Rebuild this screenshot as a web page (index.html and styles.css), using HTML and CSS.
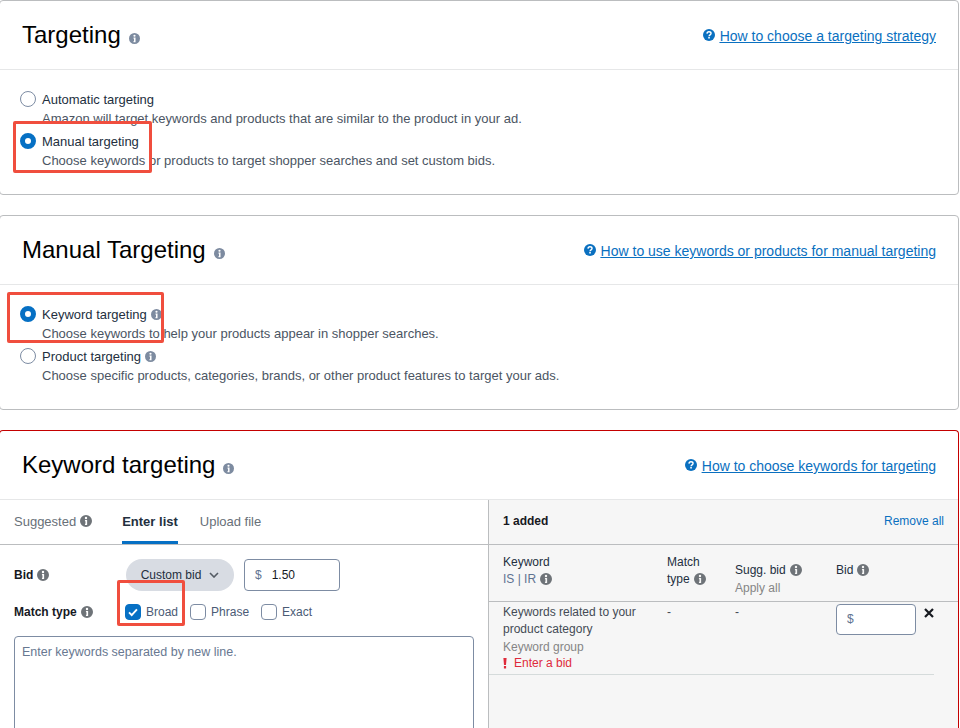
FILE: index.html
```html
<!DOCTYPE html>
<html lang="en">
<head>
<meta charset="utf-8">
<title>Targeting</title>
<link rel="stylesheet" href="styles.css">
</head>
<body>
<svg class="defs" width="0" height="0" aria-hidden="true">
  <symbol id="info" viewBox="0 0 16 16">
    <path fill-rule="evenodd" d="M8 0a8 8 0 1 1 0 16A8 8 0 0 1 8 0ZM6.6 6.6v1.8h.7v3.2h-.7v1.8h2.9V6.6ZM8 2.4a1.6 1.6 0 1 0 0 3.2 1.6 1.6 0 0 0 0-3.2Z"/>
  </symbol>
  <symbol id="help" viewBox="0 0 16 16">
    <circle cx="8" cy="8" r="8" fill="currentColor"/>
    <path d="M5.3 6.2C5.4 4.5 6.5 3.6 8 3.6c1.6 0 2.7.9 2.7 2.3 0 1.9-2.5 1.9-2.6 3.7" fill="none" stroke="#fff" stroke-width="1.9"/>
    <rect x="7" y="10.6" width="2.1" height="2.1" fill="#fff"/>
  </symbol>
</svg>

<section class="card">
  <header class="card-head">
    <h2 class="title">Targeting<svg class="ic-title"><use href="#info"/></svg></h2>
    <a class="help" href="#"><svg class="ic-help"><use href="#help"/></svg><span class="help-text">How to choose a targeting strategy</span></a>
  </header>
  <div class="card-body">
    <div class="option">
      <span class="radio"></span>
      <div class="opt-text"><div class="opt-label">Automatic targeting</div><div class="opt-desc">Amazon will target keywords and products that are similar to the product in your ad.</div></div>
    </div>
    <div class="option">
      <span class="radio on"></span>
      <div class="opt-text"><div class="opt-label">Manual targeting</div><div class="opt-desc">Choose keywords or products to target shopper searches and set custom bids.</div></div>
    </div>
  </div>
</section>

<section class="card">
  <header class="card-head">
    <h2 class="title">Manual Targeting<svg class="ic-title"><use href="#info"/></svg></h2>
    <a class="help" href="#"><svg class="ic-help"><use href="#help"/></svg><span class="help-text">How to use keywords or products for manual targeting</span></a>
  </header>
  <div class="card-body">
    <div class="option">
      <span class="radio on"></span>
      <div class="opt-text"><div class="opt-label">Keyword targeting<svg class="ic-opt"><use href="#info"/></svg></div><div class="opt-desc">Choose keywords to help your products appear in shopper searches.</div></div>
    </div>
    <div class="option">
      <span class="radio"></span>
      <div class="opt-text"><div class="opt-label">Product targeting<svg class="ic-opt"><use href="#info"/></svg></div><div class="opt-desc">Choose specific products, categories, brands, or other product features to target your ads.</div></div>
    </div>
  </div>
</section>

<section class="card card-error">
  <header class="card-head">
    <h2 class="title">Keyword targeting<svg class="ic-title"><use href="#info"/></svg></h2>
    <a class="help" href="#"><svg class="ic-help"><use href="#help"/></svg><span class="help-text">How to choose keywords for targeting</span></a>
  </header>
  <div class="split">
    <div class="left">
      <nav class="tabs">
        <span class="tab">Suggested<svg class="ic-dark"><use href="#info"/></svg></span>
        <span class="tab active">Enter list</span>
        <span class="tab">Upload file</span>
      </nav>
      <div class="form">
        <div class="form-row">
          <span class="form-label bid-label">Bid<svg class="ic-dark"><use href="#info"/></svg></span>
          <span class="pill">Custom bid<svg class="chev" viewBox="0 0 10 6"><path d="M1 1l4 4 4-4" fill="none" stroke="#545b64" stroke-width="1.6"/></svg></span>
          <span class="bid-input"><span class="dollar">$</span>1.50</span>
        </div>
        <div class="form-row match-row">
          <span class="form-label">Match type<svg class="ic-dark"><use href="#info"/></svg></span>
          <span class="check on"><svg viewBox="0 0 16 16"><path d="M3.5 8.5l3 3 6-6.5" fill="none" stroke="#fff" stroke-width="2.2"/></svg></span><span class="check-label">Broad</span>
          <span class="check"></span><span class="check-label">Phrase</span>
          <span class="check"></span><span class="check-label">Exact</span>
        </div>
        <div class="textarea">Enter keywords separated by new line.</div>
      </div>
    </div>
    <div class="right">
      <div class="right-head">
        <strong class="added">1 added</strong>
        <a class="remove" href="#">Remove all</a>
      </div>
      <div class="table-head">
        <div class="th"><div>Keyword</div><div class="th-sub-blue">IS | IR<svg class="ic-dark"><use href="#info"/></svg></div></div>
        <div class="th"><div>Match</div><div>type<svg class="ic-dark"><use href="#info"/></svg></div></div>
        <div class="th th-low"><div>Sugg. bid<svg class="ic-dark"><use href="#info"/></svg></div><div class="th-apply">Apply all</div></div>
        <div class="th th-low"><div>Bid<svg class="ic-dark"><use href="#info"/></svg></div></div>
      </div>
      <div class="table-row">
        <div class="td">
          <div class="kw">Keywords related to your product category</div>
          <div class="kw-group">Keyword group</div>
          <div class="kw-error"><svg class="ic-excl" viewBox="0 0 4 11"><path d="M.4 0h3.2L3 7H1ZM.9 8h2.2v2.6H.9Z" fill="#df2a3a"/></svg>Enter a bid</div>
        </div>
        <div class="td">-</div>
        <div class="td">-</div>
        <div class="td td-bid">
          <span class="row-input">$</span>
          <svg class="ic-x" viewBox="0 0 10 10"><path d="M1 1l8 8M9 1l-8 8" fill="none" stroke="#16191f" stroke-width="2.2"/></svg>
        </div>
      </div>
    </div>
  </div>
</section>

<div class="mark mark-manual"></div>
<div class="mark mark-keyword"></div>
<div class="mark mark-broad"></div>
</body>
</html>
```
FILE: styles.css
```css
* { box-sizing: border-box; }
html, body { margin: 0; padding: 0; }
body {
  position: relative;
  width: 960px;
  height: 728px;
  overflow: hidden;
  background: #fff;
  font-family: "Liberation Sans", Arial, sans-serif;
  font-size: 12px;
  color: #16191f;
}
.defs { position: absolute; }
a { color: #0a70c0; }

.card {
  width: 960px;
  height: 195px;
  margin: 0 0 20px -1px;
  background: #fff;
  border: 1px solid #bbbdbf;
  border-radius: 4px;
}
.card-error { height: 298px; border-color: #c40000; border-bottom: 0; border-radius: 4px 4px 0 0; margin-bottom: 0; }
.card-head {
  height: 69px;
  padding: 0 22px 0 22px;
  display: flex;
  align-items: center;
  justify-content: space-between;
  border-bottom: 1px solid #e6e7e8;
}
.title { margin: 0; font-size: 24px; font-weight: 400; color: #000; display: flex; align-items: center; }
.ic-title { width: 11px; height: 11px; margin: 6px 0 0 8px; fill: #7d8ba0; }
.help { display: flex; align-items: center; font-size: 14px; padding-top: 2px; }
.ic-help { width: 12px; height: 12px; margin: -2px 5px 0 0; color: #0a70c0; }
.help-text { text-decoration: underline; }

.card-body { padding: 20px 20px 0; }
.option { display: flex; gap: 6px; height: 42px; }
.radio {
  flex: none;
  width: 16px;
  height: 16px;
  margin-top: 1px;
  border: 1px solid #7d8ca3;
  border-radius: 50%;
  background: #fff;
}
.radio.on { border: 5px solid #0670c4; }
.opt-label { font-size: 13px; line-height: 19px; color: #232f3e; display: flex; align-items: center; }
.opt-desc { font-size: 13px; line-height: 19px; color: #4b5563; }
.ic-opt { width: 11px; height: 11px; margin: -1px 0 0 4px; fill: #7d8ba0; }
.ic-dark { width: 12px; height: 12px; margin-left: 4px; fill: #6e7378; vertical-align: -2px; }

.split { display: flex; height: 228px; }
.left { width: 488px; flex: none; }
.tabs {
  height: 45px;
  display: flex;
  padding-left: 14px;
  border-bottom: 1px solid #bbbdbf;
}
.tab { display: flex; align-items: center; height: 44px; padding-bottom: 2px; font-size: 13px; color: #687078; margin-right: 22px; }
.tab:first-child { margin-right: 30px; }
.tab.active { color: #232f3e; font-weight: 700; border-bottom: 3px solid #0670c4; padding: 2px 0 0; }
.form { padding: 14px 14px 0; }
.form-row { display: flex; align-items: center; height: 32px; }
.form-label { width: 112px; font-weight: 700; color: #16191f; flex: none; }
.bid-label { padding-bottom: 1px; }
.pill {
  width: 108px;
  height: 32px;
  padding-bottom: 1px;
  border-radius: 16px;
  background: #d8dce3;
  color: #232f3e;
  display: flex;
  align-items: center;
  justify-content: center;
  gap: 8px;
}
.chev { width: 10px; height: 6px; }
.bid-input {
  width: 96px;
  height: 32px;
  margin-left: 10px;
  border: 1px solid #7d8ca3;
  border-radius: 4px;
  padding-left: 10px;
  display: flex;
  align-items: center;
  background: #fff;
}
.dollar { color: #5f7391; margin-right: 10px; }
.match-row { margin-top: 5px; height: 32px; }
.match-row .form-label { width: 111px; }
.check {
  width: 16px;
  height: 16px;
  border: 1px solid #7d8ca3;
  border-radius: 4px;
  flex: none;
  background: #fff;
  margin-right: 5px;
}
.check.on { background: #0670c4; border-color: #0670c4; }
.check.on svg { display: block; width: 14px; height: 14px; }
.check-label { margin-right: 12px; color: #4b5b75; }
.textarea {
  margin-top: 8px;
  height: 140px;
  width: 460px;
  border: 1px solid #7d8ca3;
  border-radius: 4px;
  padding: 8px 7px;
  font-size: 12.5px;
  line-height: 14px;
  color: #687891;
}
.right { flex: 1; background: #f6f6f6; border-left: 1px solid #bbbdbf; }
.right-head {
  height: 45px;
  padding: 0 14px 2px;
  display: flex;
  align-items: center;
  justify-content: space-between;
  border-bottom: 1px solid #bbbdbf;
}
.added { font-weight: 700; color: #16191f; }
.remove { text-decoration: none; }
.table-head, .table-row { display: grid; grid-template-columns: 164px 68px 101px 1fr; padding-left: 14px; }
.table-head { height: 57px; border-bottom: 1px solid #bbbdbf; padding-top: 9px; }
.th { line-height: 17px; color: #232f3e; }
.th-low { padding-top: 8px; }
.th-sub-blue { color: #5f7391; }
.th-apply { color: #858585; margin-top: 1px; }
.table-row { height: 73px; margin-right: 24px; border-bottom: 1px solid #d5dbdb; padding-top: 2px; line-height: 17px; color: #444b55; }
.kw { width: 150px; color: #444b55; }
.kw-group { color: #858585; margin-top: 1px; }
.kw-error { color: #df2a3a; display: flex; align-items: center; margin-top: -1px; }
.ic-excl { width: 4px; height: 11px; margin: 0 7px 0 0; }
.td-bid { display: flex; align-items: flex-start; gap: 8px; }
.row-input {
  width: 80px;
  height: 31px;
  border: 1px solid #7d8ca3;
  border-radius: 4px;
  background: #fff;
  color: #5f7391;
  padding-left: 10px;
  display: flex;
  align-items: center;
}
.ic-x { width: 10px; height: 10px; margin-top: 4px; }

.mark { position: absolute; border: 3px solid #f04e3e; border-radius: 2px; }
.mark-manual { left: 13px; top: 121px; width: 139px; height: 52px; }
.mark-keyword { left: 7px; top: 292px; width: 157px; height: 51px; }
.mark-broad { left: 117px; top: 580px; width: 68px; height: 46px; }
```
